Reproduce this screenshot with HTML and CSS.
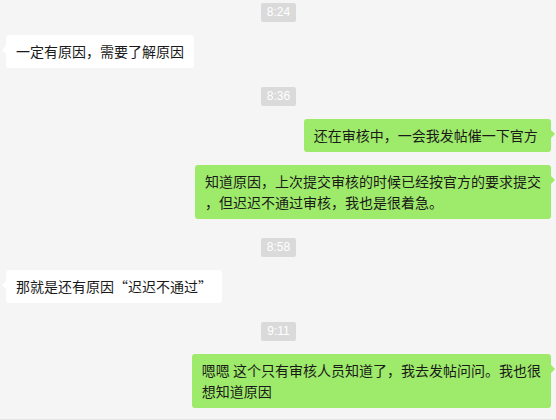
FILE: index.html
```html
<!DOCTYPE html>
<html lang="zh-CN">
<head>
    <meta charset="UTF-8">
    <meta name="viewport" content="width=device-width, initial-scale=1.0">
    <title>聊天记录</title>
    <link rel="stylesheet" href="styles.css">
</head>
<body>
    <div class="chat">
        <div class="time first">8:24</div>
        <div class="msg">
            <div class="bubble">一定有原因，需要了解原因</div>
        </div>

        <div class="time">8:36</div>
        <div class="msg self">
            <div class="bubble">还在审核中，一会我发帖催一下官方&nbsp;</div>
        </div>
        <div class="msg self">
            <div class="bubble">知道原因，上次提交审核的时候已经按官方的要求提交<br>，但迟迟不通过审核，我也是很着急。</div>
        </div>

        <div class="time">8:58</div>
        <div class="msg">
            <div class="bubble">那就是还有原因“迟迟不通过”</div>
        </div>

        <div class="time">9:11</div>
        <div class="msg self">
            <div class="bubble">嗯嗯 这个只有审核人员知道了，我去发帖问问。我也很<br>想知道原因</div>
        </div>
    </div>
</body>
</html>
```

FILE: styles.css
```css
body {
    margin: 0;
    background-color: #f5f5f5;
    font-family: 'Liberation Sans', 'Noto Sans CJK SC', sans-serif;
    color: #1a1a1a;
}
.chat {
    display: flex;
    flex-direction: column;
    box-sizing: border-box;
    min-height: 420px;
    padding: 3px 5px 0 6px;
    border-bottom: 1px solid #e6e6e6;
}
.time {
    align-self: center;
    margin-top: 19px;
    padding: 0 6px;
    height: 19px;
    line-height: 19px;
    font-size: 12px;
    color: #fff;
    background-color: #dadada;
    border-radius: 2px;
}
.time.first {
    margin-top: 0;
}
.msg {
    display: flex;
    margin-top: 13px;
}
.msg.self {
    justify-content: flex-end;
}
.bubble {
    position: relative;
    padding: 6px 10px;
    font-family: 'Noto Sans CJK SC', sans-serif;
    font-size: 14px;
    line-height: 21px;
    background-color: #fff;
    border-radius: 3px;
    white-space: nowrap;
}
.bubble::before {
    content: '';
    position: absolute;
    top: 11px;
    left: -4px;
    border-style: solid;
    border-width: 4px 4px 4px 0;
    border-color: transparent #fff transparent transparent;
}
.self .bubble {
    background-color: #9eea6a;
}
.self .bubble::before {
    left: auto;
    right: -4px;
    border-width: 4px 0 4px 4px;
    border-color: transparent transparent transparent #9eea6a;
}
```
